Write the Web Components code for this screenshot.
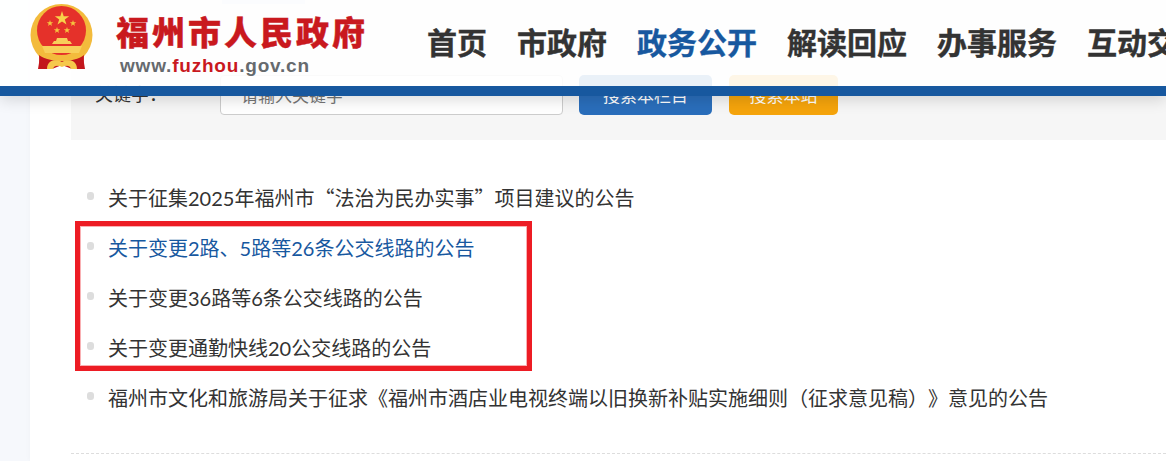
<!DOCTYPE html>
<html lang="zh-CN">
<head>
<meta charset="utf-8">
<title>福州市人民政府</title>
<style>
  html, body { margin: 0; height: 100%; overflow: hidden; }
  body { background: #f6f8fc; font-family: "Noto Sans CJK SC", "Noto Sans", sans-serif; }
  gov-item .q { font-family: "Noto Sans CJK SC", sans-serif; font-feature-settings: "fwid"; }
</style>
</head>
<body>
<gov-page>
  <gov-header slot="header"></gov-header>
  <gov-search></gov-search>
  <gov-list>
    <gov-item>关于征集2025年福州市<span class="q">“</span>法治为民办实事<span class="q">”</span>项目建议的公告</gov-item>
    <gov-item active>关于变更2路、5路等26条公交线路的公告</gov-item>
    <gov-item>关于变更36路等6条公交线路的公告</gov-item>
    <gov-item>关于变更通勤快线20公交线路的公告</gov-item>
    <gov-item>福州市文化和旅游局关于征求《福州市酒店业电视终端以旧换新补贴实施细则（征求意见稿）》意见的公告</gov-item>
  </gov-list>
</gov-page>

<script>
const templatePage = document.createElement('template');
templatePage.innerHTML = `
  <style>
    :host { display: block; height: 461px; position: relative; overflow: hidden; }
    .main {
      margin-left: 30px;
      padding-left: 41px;
      background: #fff;
      height: 461px;
      box-shadow: 0 0 6px rgba(0,0,0,.03);
    }
    .under {
      position: absolute;
      left: 222px;
      top: 0;
      width: 83px;
      height: 4px;
      background: #d5deee;
    }
    .mark {
      position: absolute;
      left: 75px;
      top: 221px;
      width: 457px;
      height: 150px;
      box-sizing: border-box;
      border: 5px solid #ed1c24;
      box-shadow: inset 0 0 0 1px rgba(237,28,36,.35);
      pointer-events: none;
    }
  </style>
  <div class="main"><slot></slot></div>
  <div class="under"></div>
  <div class="mark"></div>
  <slot name="header"></slot>
`;
class GovPage extends HTMLElement {
  constructor() {
    super();
    this.attachShadow({ mode: 'open' });
    this.shadowRoot.appendChild(templatePage.content.cloneNode(true));
  }
}

const templateHeader = document.createElement('template');
templateHeader.innerHTML = `
  <style>
    :host {
      display: flex;
      position: absolute;
      left: 0; right: 0; top: 0;
      height: 86px;
      border-bottom: 10px solid #17589f;
      background: rgba(255,255,255,.9);
      box-shadow: 0 4px 14px rgba(0,0,0,.14);
      overflow: hidden;
      font-family: "Noto Sans CJK SC", sans-serif;
    }
    .emblem { flex: none; width: 64px; height: 68px; margin: 3px 0 0 30px; }
    .brand { flex: none; width: 301px; padding: 8px 0 0 22px; box-sizing: border-box; }
    .cn {
      font-size: 33px;
      line-height: 46px;
      font-weight: 900;
      letter-spacing: 3px;
      -webkit-text-stroke: .4px currentColor;
      white-space: nowrap;
      color: #c9191e;
    }
    .en {
      font: bold 19px/24px "Liberation Sans", Arial, sans-serif;
      letter-spacing: .8px;
      color: #666a6e;
      padding-left: 4px;
    }
    .en b { color: #c9191e; }
    nav {
      display: flex;
      flex: none;
      gap: 30px;
      padding: 20px 0 0 32px;
      font-size: 30px;
      line-height: 42px;
      font-weight: 700;
      -webkit-text-stroke: .4px currentColor;
      color: #333;
      white-space: nowrap;
    }
    nav .on { color: #17589f; }
  </style>
  <svg class="emblem" viewBox="0 0 64 68">
    <path d="M10 46 L9 60 L8 66 L22 66 L32 62 L42 66 L55 66 L54 60 L53 46 Z" fill="#c3161c"/>
    <circle cx="31.5" cy="32" r="31" fill="#f3bb3c"/>
    <path d="M9 52 L10 64 L22 65 L32 60 L42 65 L53 64 L54 52 C44 60 20 60 9 52 Z" fill="#c3161c"/>
    <circle cx="31.5" cy="27.5" r="24.5" fill="#e5312a"/>
    <path d="M32 8 l1.7 5.2 h5.5 l-4.4 3.2 1.7 5.2 -4.5-3.2 -4.5 3.2 1.7-5.2 -4.4-3.2 h5.5 Z" fill="#f8d24a"/>
    <g fill="#f5c63f">
      <path d="M20 17 l.8 2.3 h2.4 l-1.9 1.4 .7 2.3 -2-1.4 -2 1.4 .7-2.3 -1.9-1.4 h2.4 Z"/>
      <path d="M43 17 l.8 2.3 h2.4 l-1.9 1.4 .7 2.3 -2-1.4 -2 1.4 .7-2.3 -1.9-1.4 h2.4 Z"/>
      <path d="M27 24 l.8 2.3 h2.4 l-1.9 1.4 .7 2.3 -2-1.4 -2 1.4 .7-2.3 -1.9-1.4 h2.4 Z"/>
      <path d="M37 24 l.8 2.3 h2.4 l-1.9 1.4 .7 2.3 -2-1.4 -2 1.4 .7-2.3 -1.9-1.4 h2.4 Z"/>
    </g>
    <path d="M22 41 h20 l-2-3 h-2 l-1-3 h-10 l-1 3 h-2 Z" fill="#f8cf5a"/>
    <path d="M12 43 h40 L49 50 h-34 Z" fill="#f8cf5a"/>
    <path d="M17 66 C17 56 27 56 32 59 C37 56 47 56 47 66 L41 66 C40 62 36 62 32 64 C28 62 24 62 23 66 Z" fill="#f6c84c"/>
  </svg>
  <div class="brand">
    <div class="cn">福州市人民政府</div>
    <div class="en">www.<b>fuzhou</b>.gov.cn</div>
  </div>
  <nav>
    <span>首页</span><span>市政府</span><span class="on">政务公开</span><span>解读回应</span><span>办事服务</span><span>互动交流</span>
  </nav>
`;
class GovHeader extends HTMLElement {
  constructor() {
    super();
    this.attachShadow({ mode: 'open' });
    this.shadowRoot.appendChild(templateHeader.content.cloneNode(true));
  }
}

const templateSearch = document.createElement('template');
templateSearch.innerHTML = `
  <style>
    :host {
      display: flex;
      align-items: center;
      height: 140px;
      box-sizing: border-box;
      padding: 75px 0 25px 24px;
      background: #f6f6f6;
      font-size: 18px;
      color: #333;
    }
    .label { width: 125px; flex: none; line-height: 36px; margin-bottom: 4px; }
    .input {
      width: 343px;
      height: 40px;
      box-sizing: border-box;
      flex: none;
      border: 1px solid #ccc;
      border-radius: 4px;
      background: #fff;
      padding-left: 20px;
      font-size: 17px;
      line-height: 38px;
      color: #757575;
    }
    .btn {
      height: 40px;
      flex: none;
      margin-left: 16px;
      border-radius: 5px;
      font-size: 17px;
      line-height: 40px;
      text-align: center;
      color: #fff;
    }
    .column { width: 133px; background: #2a6ebb; }
    .site { width: 109px; margin-left: 17px; background: #f5a40c; }
  </style>
  <div class="label">关键字：</div>
  <div class="input">请输入关键字</div>
  <div class="btn column">搜索本栏目</div>
  <div class="btn site">搜索本站</div>
`;
class GovSearch extends HTMLElement {
  constructor() {
    super();
    this.attachShadow({ mode: 'open' });
    this.shadowRoot.appendChild(templateSearch.content.cloneNode(true));
  }
}

const templateList = document.createElement('template');
templateList.innerHTML = `
  <style>
    :host {
      display: block;
      padding: 33px 0 30px;
      border-bottom: 1px dashed #ddd;
    }
  </style>
  <slot></slot>
`;
class GovList extends HTMLElement {
  constructor() {
    super();
    this.attachShadow({ mode: 'open' });
    this.shadowRoot.appendChild(templateList.content.cloneNode(true));
  }
}

const templateItem = document.createElement('template');
templateItem.innerHTML = `
  <style>
    :host {
      display: flex;
      align-items: center;
      height: 50px;
      font-family: Lato, "Noto Sans CJK SC", sans-serif;
      font-size: 20px;
      color: #333;
      white-space: nowrap;
      text-spacing-trim: space-all;
    }
    :host([active]) { color: #17589f; }
    .dot {
      flex: none;
      width: 7px;
      height: 8px;
      margin: -4px 14px 0 16px;
      border-radius: 3px;
      background: #ddd;
    }
    .txt { display: block; margin-top: -2px; }
  </style>
  <span class="dot"></span><span class="txt"><slot></slot></span>
`;
class GovItem extends HTMLElement {
  constructor() {
    super();
    this.attachShadow({ mode: 'open' });
    this.shadowRoot.appendChild(templateItem.content.cloneNode(true));
  }
}

window.customElements.define('gov-page', GovPage);
window.customElements.define('gov-header', GovHeader);
window.customElements.define('gov-search', GovSearch);
window.customElements.define('gov-list', GovList);
window.customElements.define('gov-item', GovItem);
</script>
</body>
</html>
